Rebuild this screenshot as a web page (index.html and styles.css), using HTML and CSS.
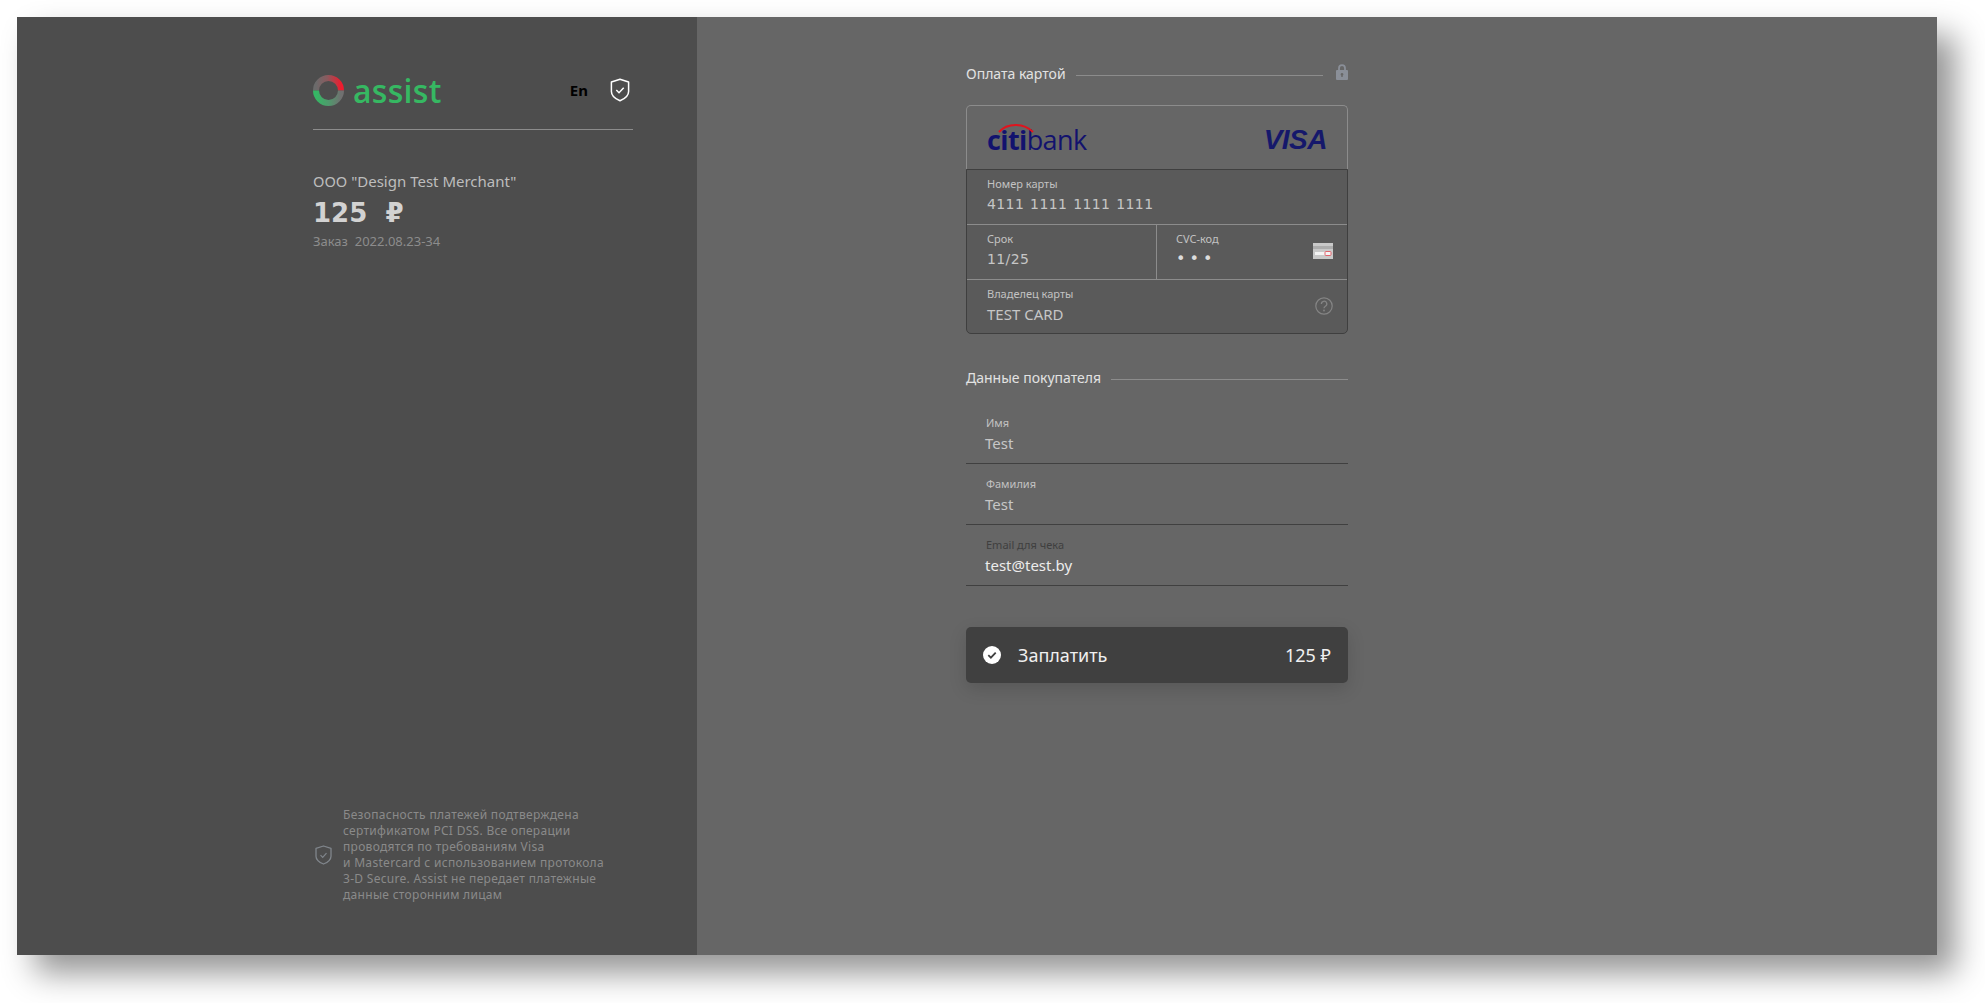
FILE: index.html
```html
<!DOCTYPE html>
<html lang="ru">
<head>
  <meta charset="UTF-8" />
  <title>Assist - оплата картой</title>
  <link rel="stylesheet" href="styles.css">
</head>
<body>
  <div class="window">
    <aside class="side">
      <div class="side-top">
        <div class="side-head">
          <div class="logo">
            <svg class="logo-ring" width="31" height="31" viewBox="0 0 31 31">
              <defs>
                <linearGradient id="ringTop" x1="0" y1="0" x2="1" y2="0">
                  <stop offset="0" stop-color="#6b6b6b"/>
                  <stop offset="0.45" stop-color="#8a5a5e"/>
                  <stop offset="1" stop-color="#ee1c2e"/>
                </linearGradient>
                <linearGradient id="ringBottom" x1="0" y1="0" x2="1" y2="0">
                  <stop offset="0" stop-color="#35b764"/>
                  <stop offset="0.5" stop-color="#4f9a6c"/>
                  <stop offset="1" stop-color="#707070"/>
                </linearGradient>
              </defs>
              <path d="M3 15.5a12.5 12.5 0 0 1 25 0" fill="none" stroke="url(#ringTop)" stroke-width="6"/>
              <path d="M3 15.5a12.5 12.5 0 0 0 25 0" fill="none" stroke="url(#ringBottom)" stroke-width="6"/>
            </svg>
            <span class="logo-text">assist</span>
          </div>
          <div class="side-tools">
            <span class="lang">En</span>
            <svg width="20" height="24" viewBox="0 0 20 24">
              <path d="M10 1.2 18.6 4v9.5c0 4.300-3.700 7.300-8.600 9.300-4.900-2-8.600-5-8.600-9.300V4z" fill="none" stroke="#fff" stroke-width="1.500" stroke-linejoin="round"/>
              <path d="M6.300 12l2.700 2.700 4.700-5" fill="none" stroke="#fff" stroke-width="1.500"/>
            </svg>
          </div>
        </div>
        <div class="merchant">ООО "Design Test Merchant"</div>
        <div class="amount">125&nbsp; ₽</div>
        <div class="order">Заказ&nbsp; 2022.08.23-34</div>
      </div>
      <div class="secure">
        <svg class="secure-icon" width="17" height="20" viewBox="0 0 17 20">
          <path d="M8.500 1 16 3.400v7.800c0 3.600-3.200 6-7.500 7.800C4.200 17.200 1 14.800 1 11.200V3.400z" fill="none" stroke="#80868c" stroke-width="1.300" stroke-linejoin="round"/>
          <path d="M5.500 10.200l2.200 2.200 3.800-4.200" fill="none" stroke="#80868c" stroke-width="1.200"/>
        </svg>
        <p class="secure-text">Безопасность платежей подтверждена<br>сертификатом PCI DSS. Все операции<br>проводятся по требованиям Visa<br>и Mastercard с использованием протокола<br>3-D Secure. Assist не передает платежные<br>данные сторонним лицам</p>
      </div>
    </aside>

    <main class="content">
      <form class="form">
        <div class="section-title">
          <span>Оплата картой</span>
          <i class="section-line"></i>
          <svg class="lock" width="12" height="16" viewBox="0 0 12 16">
            <path d="M3 7V4.200a3 3 0 0 1 6 0V7" fill="none" stroke="#8a8f98" stroke-width="1.800"/>
            <path d="M1 6h10a1 1 0 0 1 1 1v8a1 1 0 0 1-1 1H1a1 1 0 0 1-1-1V7a1 1 0 0 1 1-1zm5 3a1.400 1.400 0 0 0-.7 2.600V13h1.400v-1.400A1.400 1.400 0 0 0 6 9z" fill="#8a8f98"/>
          </svg>
        </div>

        <div class="card">
          <div class="card-head">
            <div class="citi">
              <svg class="citi-arc" width="36" height="10" viewBox="0 0 36 10">
                <path d="M1 9C9-.5 26-.5 35 9" fill="none" stroke="#e0141e" stroke-width="2"/>
              </svg>
              <b>citi</b><span>bank</span>
            </div>
            <div class="visa">VISA</div>
          </div>
          <div class="card-body">
            <div class="card-row">
              <div class="cell">
                <div class="label">Номер карты</div>
                <div class="value num card-number">4111 1111 1111 1111</div>
              </div>
            </div>
            <div class="card-row">
              <div class="cell cell-half">
                <div class="label">Срок</div>
                <div class="value num">11/25</div>
              </div>
              <div class="cell cell-half cell-cvc">
                <div>
                  <div class="label">CVC-код</div>
                  <div class="value dots">•••</div>
                </div>
                <svg class="cvc-icon" width="20" height="16" viewBox="0 0 20 16">
                  <rect width="20" height="16" fill="#c9c9c9"/>
                  <rect y="3" width="20" height="3" fill="#adadad"/>
                  <rect x="2" y="9" width="16" height="3" fill="#f4f4f4"/>
                  <rect x="12" y="8.500" width="6" height="4" rx="1" fill="#f4f4f4" stroke="#e2616b"/>
                </svg>
              </div>
            </div>
            <div class="card-row">
              <div class="cell cell-owner">
                <div>
                  <div class="label">Владелец карты</div>
                  <div class="value">TEST CARD</div>
                </div>
                <svg class="help-icon" width="18" height="18" viewBox="0 0 18 18">
                  <circle cx="9" cy="9" r="8.200" fill="none" stroke="#858585" stroke-width="1.200"/>
                  <path d="M6.400 7a2.700 2.700 0 1 1 4 2.300c-.9.500-1.400 1-1.400 2" fill="none" stroke="#858585" stroke-width="1.300"/>
                  <circle cx="9" cy="13.500" r=".9" fill="#858585"/>
                </svg>
              </div>
            </div>
          </div>
        </div>

        <div class="section-title section-buyer">
          <span>Данные покупателя</span>
          <i class="section-line"></i>
        </div>

        <div class="fields">
          <div class="field">
            <div class="label">Имя</div>
            <div class="value">Test</div>
          </div>
          <div class="field">
            <div class="label">Фамилия</div>
            <div class="value">Test</div>
          </div>
          <div class="field field-active">
            <div class="label">Email для чека</div>
            <div class="value">test@test.by</div>
          </div>
        </div>

        <button class="pay" type="button">
          <svg width="18" height="18" viewBox="0 0 18 18">
            <circle cx="9" cy="9" r="9" fill="#fff"/>
            <path d="M5.300 9.200l2.600 2.500 4.800-5" fill="none" stroke="#404040" stroke-width="1.800"/>
          </svg>
          <span class="pay-text">Заплатить</span>
          <span class="pay-sum">125 ₽</span>
        </button>
      </form>
    </main>
  </div>
</body>
</html>
```

FILE: styles.css
```css
* {
  box-sizing: border-box;
}
html, body {
  margin: 0;
  background: #fff;
}
body {
  font-family: "Noto Sans", Roboto, sans-serif;
  height: 1003px;
  padding: 17px 0 0 17px;
  overflow: hidden;
}
.window {
  display: flex;
  width: 1920px;
  height: 938px;
  box-shadow: 18px 18px 30px rgba(0, 0, 0, 0.42);
}

/* left column */
.side {
  width: 680px;
  background: #4d4d4d;
  padding: 58px 64px 52px 296px;
  display: flex;
  flex-direction: column;
  justify-content: space-between;
}
.side-head {
  display: flex;
  justify-content: space-between;
  align-items: center;
  height: 55px;
  padding: 0 3px 24px 0;
  border-bottom: 1px solid #8c8c8c;
}
.logo {
  display: flex;
  align-items: center;
  gap: 9px;
}
.logo-ring {
  display: block;
}
.logo-text {
  font-family: "Open Sans", sans-serif;
  font-size: 32px;
  line-height: 31px;
  font-weight: 600;
  color: #36b862;
  letter-spacing: 0.3px;
}
.side-tools {
  display: flex;
  align-items: center;
  gap: 22px;
}
.lang {
  font-size: 15px;
  font-weight: 700;
  color: #000;
}
.merchant {
  margin-top: 41px;
  font-size: 15px;
  line-height: 20px;
  color: #bdbdbd;
}
.amount {
  margin-top: 4px;
  font-family: "DejaVu Sans", sans-serif;
  font-size: 26px;
  line-height: 36px;
  font-weight: 700;
  color: #d2d2d2;
}
.order {
  margin-top: 1px;
  font-size: 13px;
  line-height: 18px;
  color: #8c8c8c;
}
.secure {
  display: flex;
  align-items: center;
  gap: 11px;
  padding-left: 2px;
}
.secure-icon {
  flex: none;
}
.secure-text {
  margin: 0;
  font-size: 12px;
  line-height: 16px;
  letter-spacing: 0.3px;
  color: #8a8a8a;
  white-space: nowrap;
}

/* right column */
.content {
  flex: 1;
  background: #666;
  padding: 47px 0 0 269px;
}
.form {
  width: 382px;
}
.section-title {
  display: flex;
  align-items: center;
  height: 20px;
  font-size: 14px;
  line-height: 20px;
  color: #e2e2e2;
}
.section-line {
  flex: 1;
  height: 1px;
  margin: 3px 0 0 10px;
  background: #8c8c8c;
}
.lock {
  margin: -4px 0 0 13px;
}
.section-buyer {
  margin-top: 34px;
}

.card {
  margin-top: 21px;
}
.card-head {
  display: flex;
  justify-content: space-between;
  align-items: center;
  height: 64px;
  padding: 4px 20px 0;
  border: 1px solid #8c8c8c;
  border-bottom: 0;
  border-radius: 5px 5px 0 0;
}
.citi {
  position: relative;
  font-family: "Open Sans", sans-serif;
  font-size: 27px;
  line-height: 30px;
  letter-spacing: -0.6px;
  color: #12126e;
}
.citi b {
  font-weight: 700;
}
.citi span {
  font-weight: 400;
}
.citi-arc {
  position: absolute;
  left: 11px;
  top: -2px;
}
.visa {
  font-family: "Liberation Sans", sans-serif;
  font-size: 28px;
  line-height: 30px;
  font-weight: 700;
  font-style: italic;
  letter-spacing: -0.5px;
  color: #15186b;
}
.card-body {
  background: #5a5a5a;
  border: 1px solid #3f3f3f;
  border-radius: 0 0 5px 5px;
}
.card-row {
  display: flex;
  height: 55px;
  border-top: 1px solid #8c8c8c;
}
.card-row:first-child {
  height: 54px;
  border-top: 0;
}
.card-row:last-child {
  height: 54px;
}
.cell {
  flex: 1;
  padding: 6px 20px 0;
}
.cell-half {
  flex: none;
  width: 189px;
}
.cell-half + .cell-half {
  width: 191px;
  border-left: 1px solid #8c8c8c;
  padding-left: 19px;
}
.cell-cvc, .cell-owner {
  display: flex;
  justify-content: space-between;
  align-items: center;
  padding-top: 0;
  padding-right: 14px;
}
.cell-owner {
  padding-right: 14px;
}
.cell-cvc > div, .cell-owner > div {
  align-self: flex-start;
  padding-top: 6px;
}
.label {
  font-size: 11px;
  line-height: 16px;
  color: #c2c2c2;
}
.value {
  margin-top: 1px;
  font-size: 15px;
  line-height: 22px;
  color: #c6c6c6;
}
.num {
  font-family: "DejaVu Sans", sans-serif;
  font-size: 14px;
  letter-spacing: 0.4px;
}
.card-number {
  word-spacing: 1px;
}
.dots {
  font-family: "DejaVu Sans", sans-serif;
  font-size: 16px;
  letter-spacing: 4px;
  color: #dcdcdc;
}
.cvc-icon {
  margin-top: -3px;
}
.help-icon {
  margin-top: -1px;
}

.fields {
  margin-top: 15px;
}
.field {
  height: 61px;
  padding: 12px 20px 0;
  border-bottom: 1px solid #404040;
}
.field .value {
  margin-left: -1px;
}
.field-active .label {
  color: #3f3f3f;
}
.field-active .value {
  color: #ececec;
}

.pay {
  display: flex;
  align-items: center;
  width: 100%;
  height: 56px;
  margin-top: 41px;
  padding: 0 17px;
  border: 0;
  border-radius: 5px;
  background: #404040;
  box-shadow: 0 6px 18px rgba(0, 0, 0, 0.14);
  font-family: inherit;
  font-size: 18px;
  color: #f0f0f0;
}
.pay-text {
  margin-left: 17px;
}
.pay-sum {
  margin-left: auto;
}
```
